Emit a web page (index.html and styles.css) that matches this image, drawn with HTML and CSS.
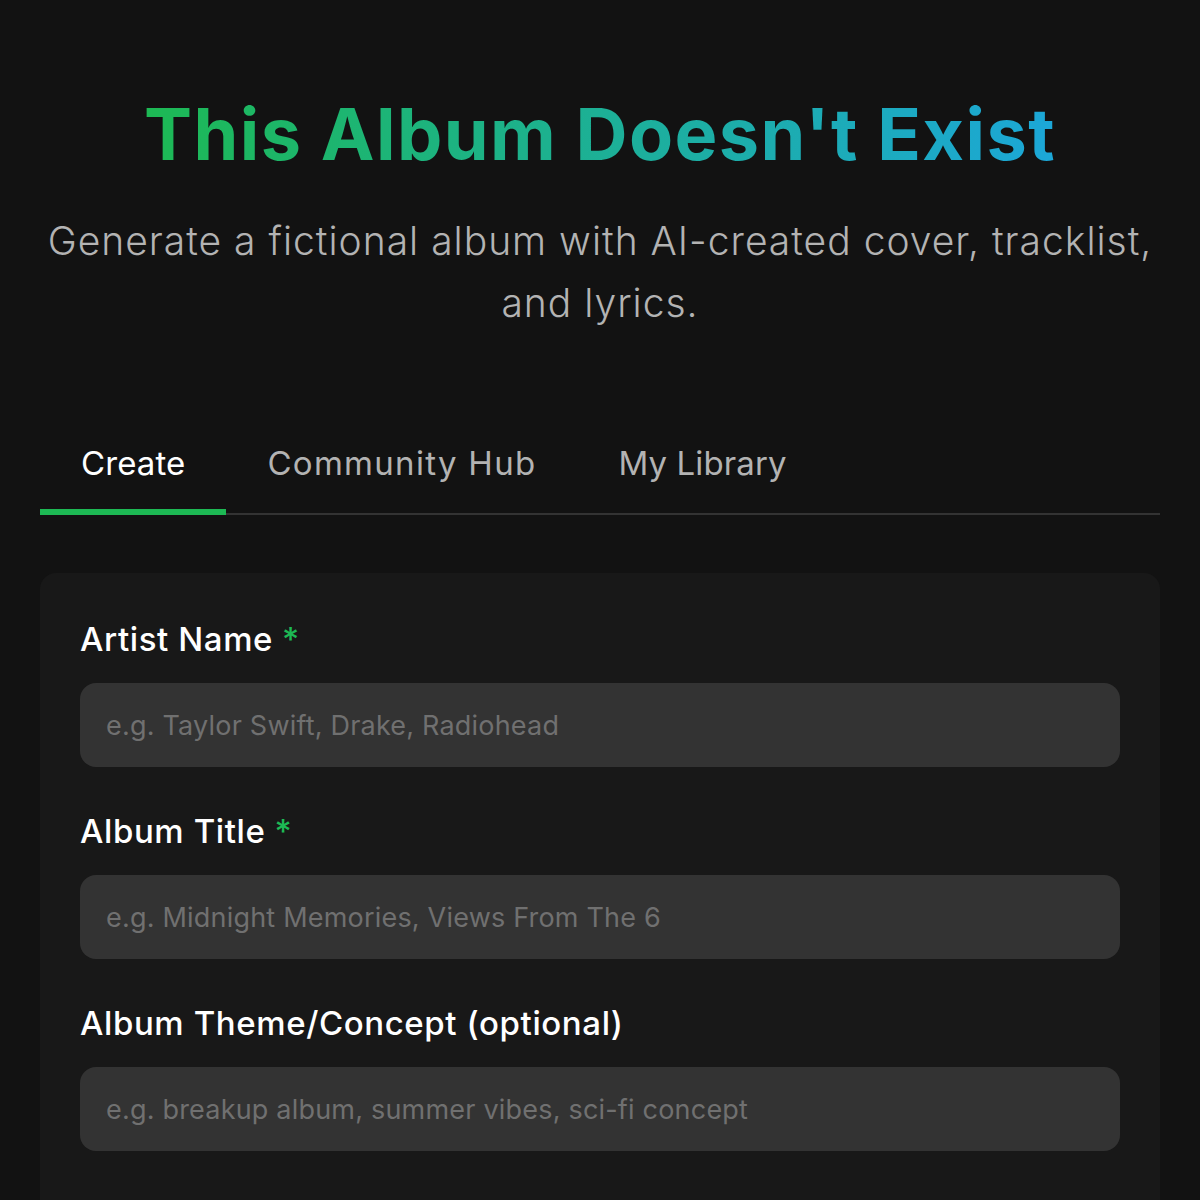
FILE: index.html
```html
<!DOCTYPE html>
<html lang="en">
<head>
<meta charset="utf-8">
<title>This Album Doesn't Exist</title>
<link rel="stylesheet" href="styles.css">
</head>
<body>
<div class="page">
  <header class="hero">
    <h1 class="title"><span class="title-text">This Album Doesn't Exist</span></h1>
    <p class="subtitle">Generate a fictional album with AI-created cover, tracklist, and lyrics.</p>
  </header>

  <nav class="tabs">
    <button class="tab active">Create</button>
    <button class="tab tab-wide">Community Hub</button>
    <button class="tab">My Library</button>
  </nav>

  <form class="card">
    <div class="field">
      <label class="label">Artist Name<span class="req">*</span></label>
      <input class="input" type="text" placeholder="e.g. Taylor Swift, Drake, Radiohead">
    </div>
    <div class="field">
      <label class="label">Album Title<span class="req">*</span></label>
      <input class="input" type="text" placeholder="e.g. Midnight Memories, Views From The 6">
    </div>
    <div class="field">
      <label class="label">Album Theme/Concept (optional)</label>
      <input class="input" type="text" placeholder="e.g. breakup album, summer vibes, sci-fi concept">
    </div>
  </form>
</div>
</body>
</html>
```
FILE: styles.css
```css
* { box-sizing: border-box; }

html, body {
  margin: 0;
  padding: 0;
  background: #121212;
}

body {
  font-family: "Inter", "Noto Sans", sans-serif;
  color: #ffffff;
}

.page {
  max-width: 1200px;
  margin: 0 auto;
  padding: 0 40px;
}

.hero {
  text-align: center;
}

.title {
  margin: 91px 0 0;
  font-size: 72px;
  line-height: 1.2;
  font-weight: 700;
  letter-spacing: 1.4px;
}

.title-text {
  display: inline-block;
  background: linear-gradient(90deg, #1db954 0%, #1ca7d8 100%);
  -webkit-background-clip: text;
  background-clip: text;
  color: transparent;
}

.subtitle {
  margin: 33px 0 0;
  font-size: 39px;
  line-height: 62px;
  font-weight: 300;
  letter-spacing: 1px;
  color: #b3b3b3;
}

.tabs {
  display: flex;
  margin-top: 83px;
  border-bottom: 2px solid #333333;
}

.tab {
  background: none;
  border: none;
  border-bottom: 6px solid transparent;
  margin-bottom: -2px;
  padding: 22px 41px 22px;
  font-family: inherit;
  font-size: 33px;
  line-height: 48px;
  font-weight: 400;
  letter-spacing: 0.1px;
  color: #b3b3b3;
  cursor: pointer;
}

.tab-wide {
  letter-spacing: 1.3px;
}

.tab.active {
  color: #ffffff;
  border-bottom-color: #1db954;
}

.card {
  margin-top: 58px;
  background: #181818;
  border-radius: 16px;
  padding: 42px 40px 80px;
  display: flex;
  flex-direction: column;
  gap: 40px;
}

.field {
  display: flex;
  flex-direction: column;
}

.label {
  font-size: 33px;
  line-height: 48px;
  font-weight: 500;
  letter-spacing: 0.6px;
  color: #ffffff;
  margin-bottom: 20px;
}

.req {
  color: #1db954;
  margin-left: 9px;
}

.input {
  height: 84px;
  width: 100%;
  background: #333333;
  border: none;
  border-radius: 16px;
  padding: 0 26px;
  font-family: inherit;
  font-size: 27px;
  letter-spacing: 0.2px;
  color: #ffffff;
  outline: none;
}

.input::placeholder {
  color: #707070;
}
```
